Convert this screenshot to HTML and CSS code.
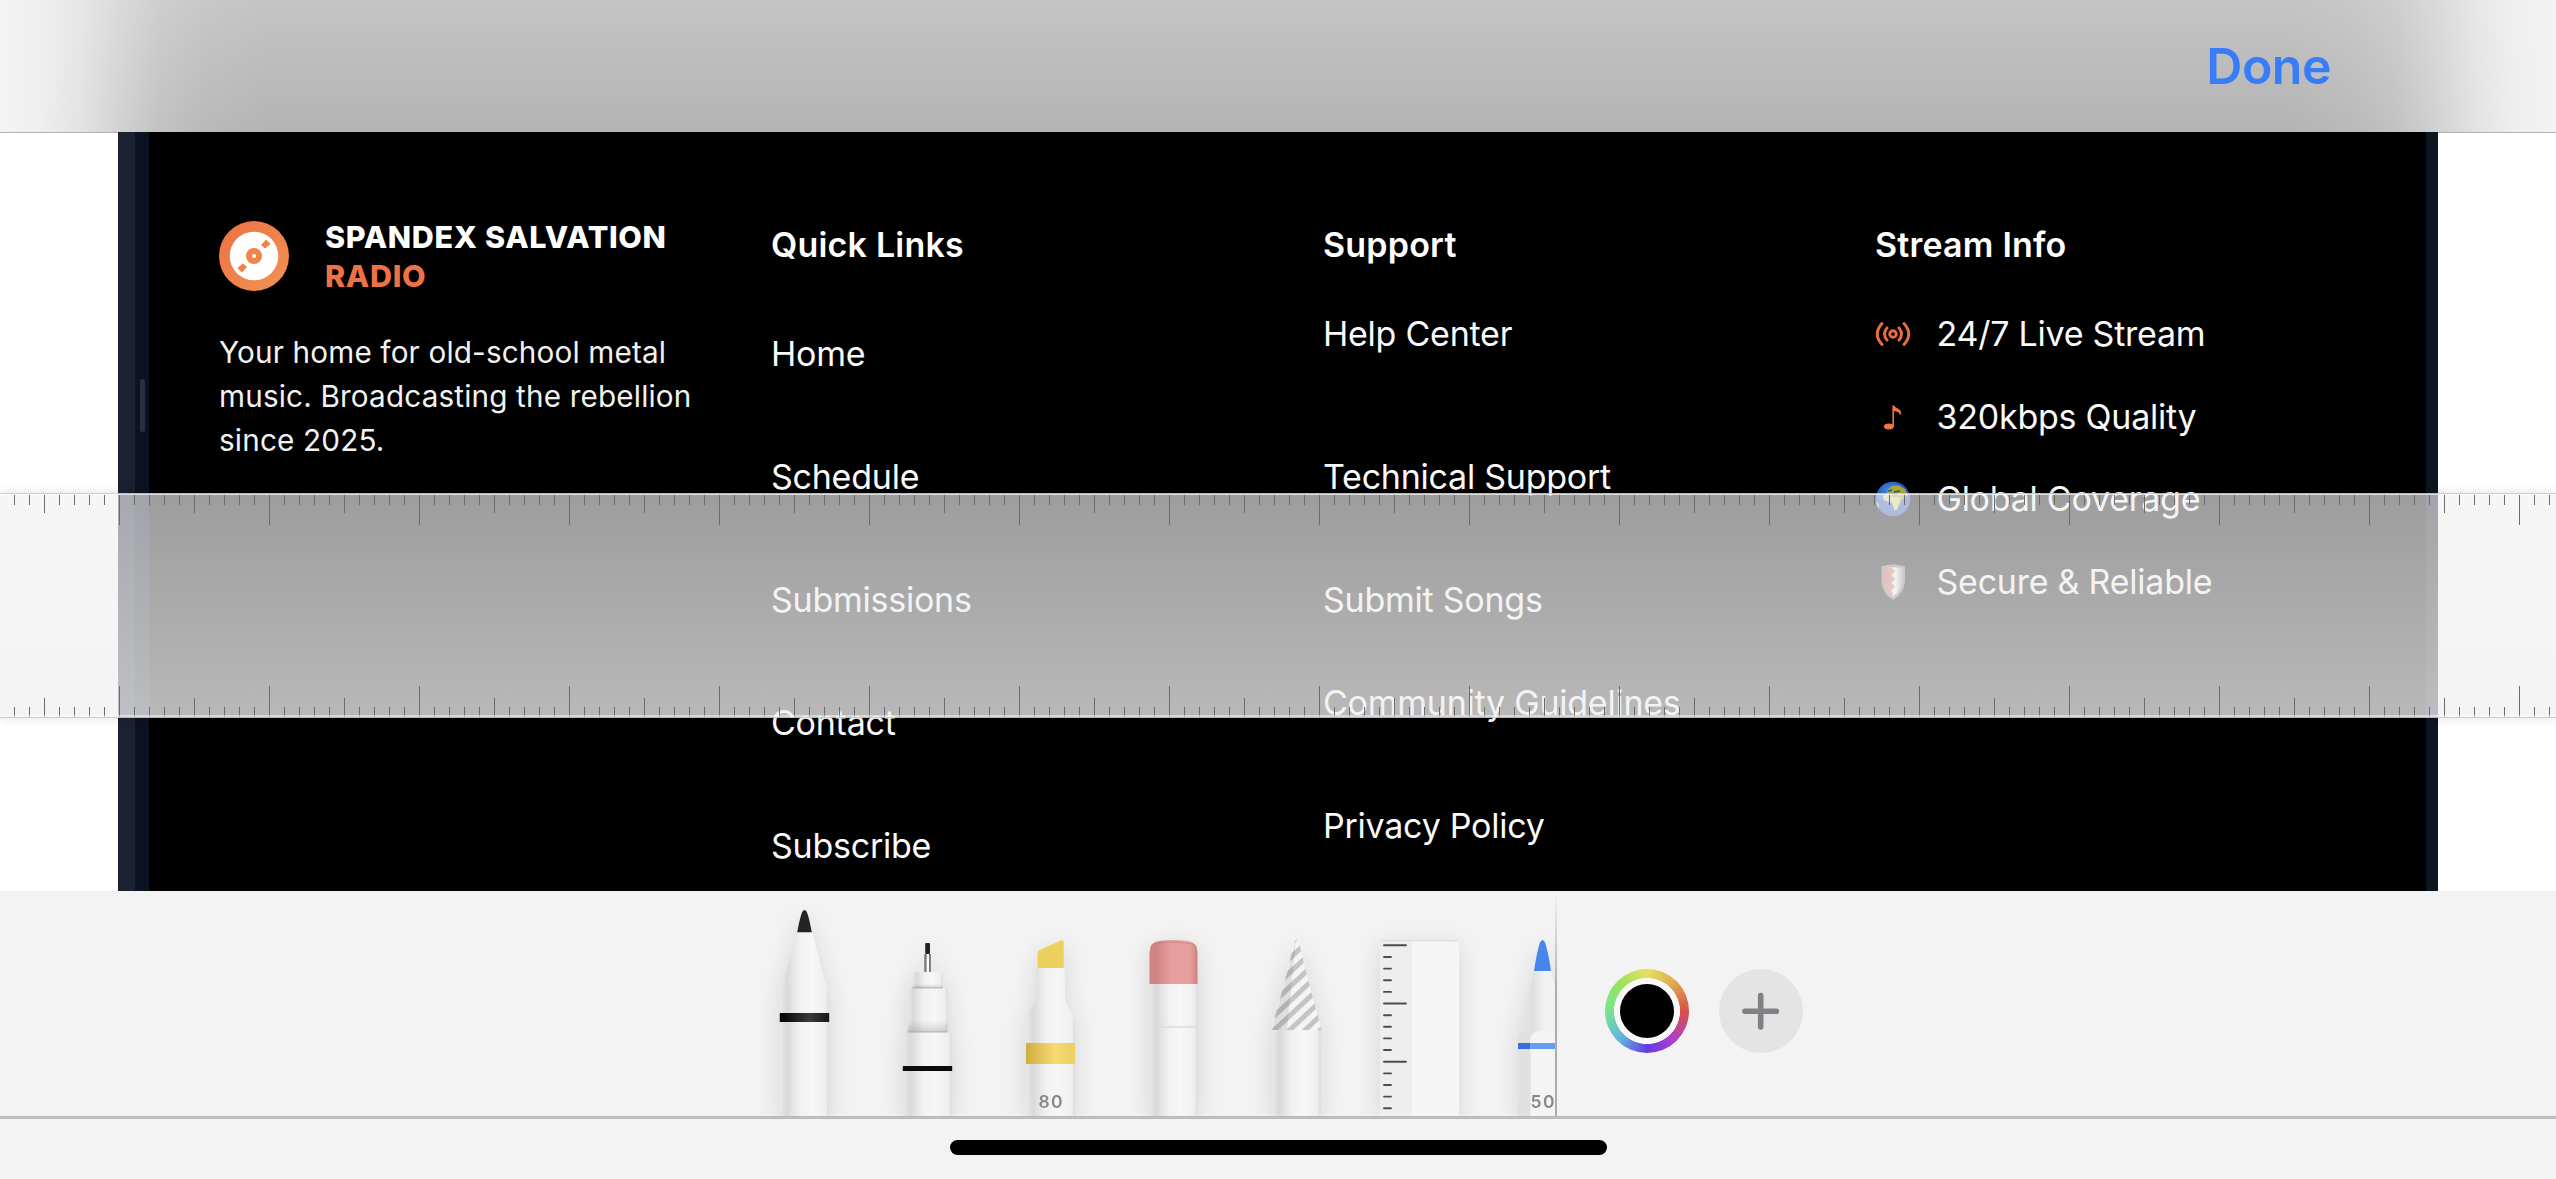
FILE: index.html
```html
<!DOCTYPE html>
<html lang="en">
<head>
<meta charset="utf-8">
<title>Markup</title>
<link rel="stylesheet" href="styles.css">
</head>
<body>
<header class="topbar"><button class="done">Done</button></header>

<main class="canvas">
  <div class="page">
    <footer class="footer">
      <section class="about">
        <div class="brand">
          <svg class="logo" viewBox="0 0 70 70">
            <defs><linearGradient id="disc" x1="0" y1="0" x2="1" y2="1"><stop offset="0" stop-color="#ee7043"/><stop offset="1" stop-color="#f09452"/></linearGradient></defs>
            <circle cx="35" cy="35" r="35" fill="url(#disc)"/>
            <circle cx="35" cy="35" r="24.3" fill="#fff"/>
            <circle cx="35" cy="35" r="5" fill="none" stroke="#f08349" stroke-width="6"/>
            <path d="M42 24 L47 18.600 L51.700 23 L46 27.500 Z M28 46 L23 51.400 L18.300 47 L24 42.500 Z" fill="#f08349"/>
          </svg>
          <h2 class="brand-name">SPANDEX SALVATION<br><span class="accent">RADIO</span></h2>
        </div>
        <p class="tagline">Your home for old-school metal<br>music. Broadcasting the rebellion<br>since 2025.</p>
      </section>
      <section>
        <h3 class="heading">Quick Links</h3>
        <ul class="links quick"><li>Home</li><li>Schedule</li><li>Submissions</li><li>Contact</li><li>Subscribe</li></ul>
      </section>
      <section>
        <h3 class="heading">Support</h3>
        <ul class="links support"><li class="wide">Help Center</li><li>Technical Support</li><li class="tight">Submit Songs</li><li>Community Guidelines</li><li>Privacy Policy</li></ul>
      </section>
      <section>
        <h3 class="heading">Stream Info</h3>
        <ul class="links stream">
          <li><svg class="icon" viewBox="0 0 36 36" fill="none" stroke="#ea6d40" stroke-width="2.900" stroke-linecap="round"><circle cx="18" cy="18" r="3.300"/><path d="M12 11.800Q7 18 12 24.200M24 11.800Q29 18 24 24.200M7 7.500Q-2.500 18 7 28.500M29 7.500Q38.500 18 29 28.500"/></svg>24/7 Live Stream</li>
          <li><svg class="icon" viewBox="0 0 36 36"><ellipse cx="13.800" cy="27.500" rx="4.900" ry="3" fill="#ee7346"/><path d="M18.200 27.500V6.500C19 11 27 9.500 25.200 15.500" fill="none" stroke="#ee7346" stroke-width="1.600"/><path d="M18.200 7Q19 9 24 11.500Q26.500 13 25 15.500Q25 12.500 18.200 12Z" fill="#ee7346"/></svg>320kbps Quality</li>
          <li><svg class="icon" viewBox="0 0 36 36"><defs><radialGradient id="sea" cx=".4" cy=".3" r=".75"><stop offset="0" stop-color="#4f93e6"/><stop offset=".55" stop-color="#2458c8"/><stop offset="1" stop-color="#3448a8"/></radialGradient></defs><circle cx="18" cy="18" r="17.300" fill="url(#sea)"/><path d="M13 8L18 4.500L24 4.500L30 8L33 14L30 16L27 19L22 29L19.500 29.500L17 22L9 19.500L7.500 15L12 12Z" fill="#aead35"/><path d="M8 15L12 13L16 13.500L18 16L24 16L25 19L21.500 29L19.500 29L17 21.500L9 19Z" fill="#dcd893"/><path d="M13 10L17 9M19 11L25 10M17 13L23 13.500" stroke="#2458c8" stroke-width="1.500"/><path d="M1 21L4 23L3.500 28Z" fill="#d8c85c"/></svg>Global Coverage</li>
          <li><svg class="icon" viewBox="0 0 36 36"><defs><linearGradient id="steel"><stop offset="0" stop-color="#888"/><stop offset=".6" stop-color="#fff"/><stop offset="1" stop-color="#888"/></linearGradient></defs><path d="M6.500 2.500Q18-1.500 30 2.500V17Q29 29 18 36Q7 29 6.500 17Z" fill="#777"/><path d="M9 4.500Q18 2 27.500 4.500V17Q26.500 27 18 32.500Q9.500 27 9 17Z" fill="url(#steel)"/><path d="M9 4.500L16 3.500L20.500 7.500L16 11L20.500 15L16 18.500L20.500 22.500L16 26L18 30L17 31.800Q9.500 27 9 17Z" fill="#d44a3c" opacity=".8"/></svg>Secure &amp; Reliable</li>
        </ul>
      </section>
    </footer>
  </div>
  <i class="handle"></i>
  <div class="ruler"></div>
</main>

<div class="toolbar">
  <div class="tools">
    <svg class="tool" viewBox="0 0 123 225">
      <defs>
        <linearGradient id="barrel"><stop offset="0" stop-color="#e9e9e9"/><stop offset=".14" stop-color="#d9d9d9"/><stop offset=".4" stop-color="#f1f1f1"/><stop offset=".65" stop-color="#f7f7f7"/><stop offset=".93" stop-color="#efefef"/><stop offset="1" stop-color="#dcdcdc"/></linearGradient>
        <linearGradient id="ink"><stop offset="0" stop-color="#000"/><stop offset=".6" stop-color="#3a3a3a"/><stop offset="1" stop-color="#181818"/></linearGradient>
      </defs>
      <path d="M54 41.500H69L83 93Q86 103 86 112V235H37V112Q37 103 40 93Z" fill="url(#barrel)"/>
      <path d="M54.200 41.300Q57 26 59.300 20.800Q61.500 17 63.700 20.800Q66 26 68.800 41.300Z" fill="#242424"/>
      <rect x="36.800" y="122" width="49.400" height="9" fill="url(#ink)"/>
    </svg>
    <svg class="tool" viewBox="0 0 123 225">
      <defs><linearGradient id="fade" x2="0" y2="1"><stop offset=".75" stop-color="#000" stop-opacity="0"/><stop offset="1" stop-color="#000" stop-opacity=".15"/></linearGradient></defs>
      <rect x="58.300" y="63" width="6.600" height="18" fill="#777"/><rect x="60.600" y="63" width="2.400" height="18" fill="#fff"/>
      <rect x="59.200" y="52" width="4.800" height="11" rx="1" fill="#222"/>
      <path d="M46.500 81H76.500V97H46.500Z" fill="url(#barrel)"/><path d="M46.500 81H76.500V97H46.500Z" fill="url(#fade)"/>
      <path d="M41.500 97H81.500V141H41.500Z" fill="url(#barrel)"/><path d="M41.500 97H81.500V141H41.500Z" fill="url(#fade)"/>
      <path d="M37.500 141H85.500V235H37.500Z" fill="url(#barrel)"/>
      <path d="M46.500 97H76.500M41.500 141H81.500" stroke="#a5a5a5" stroke-width=".8"/>
      <rect x="36.800" y="175" width="49.400" height="5" fill="#0b0b0b"/>
    </svg>
    <svg class="tool" viewBox="0 0 123 225">
      <defs><linearGradient id="amber"><stop offset="0" stop-color="#cfae40"/><stop offset=".6" stop-color="#f7da72"/><stop offset="1" stop-color="#eccd5e"/></linearGradient></defs>
      <path d="M47.500 77H75.500L76 107C76 116 86 118 86 136V235H37V136C37 118 47 116 47 107Z" fill="url(#barrel)"/>
      <path d="M48.600 77V62Q48.600 60 51 58.800L72.500 49.300Q74.700 48.600 74.700 51.500V77Z" fill="#edcf5e"/>
      <rect x="37" y="152" width="49" height="21" fill="url(#amber)"/>
      <text x="62.300" y="217" class="size">80</text>
    </svg>
    <svg class="tool" viewBox="0 0 123 225">
      <defs><linearGradient id="rubber"><stop offset="0" stop-color="#d08383"/><stop offset=".15" stop-color="#cf8484"/><stop offset=".45" stop-color="#e69f9d"/><stop offset=".85" stop-color="#e69f9d"/><stop offset="1" stop-color="#cc8080"/></linearGradient></defs>
      <rect x="37.500" y="92" width="48" height="140" fill="url(#barrel)"/>
      <path d="M37.500 93V62Q37.500 51 47 50Q61.500 48 76 50Q85.500 51 85.500 62V93Z" fill="url(#rubber)"/>
      <path d="M41 53.500Q61 48.500 82 53.500" fill="none" stroke="#c57a7a" stroke-width="1.200" opacity=".7"/>
      <path d="M37.500 136H85.500" stroke="#dcdcdc" stroke-width="1.500"/>
    </svg>
    <svg class="tool" viewBox="0 0 123 225">
      <defs>
        <pattern id="stripes" width="10" height="10.500" patternUnits="userSpaceOnUse" patternTransform="rotate(-43)"><rect width="10" height="10.500" fill="#f5f5f5"/><rect width="10" height="5" fill="#c3c4c6"/></pattern>
        <clipPath id="cone"><path d="M37 139Q38 131 45.500 106L53 77L58.300 54.500Q61.500 43 64.700 54.500L70 77L77.500 106Q85 131 86 139Z"/></clipPath>
      </defs>
      <rect x="37.500" y="139" width="48" height="95" fill="url(#barrel)"/>
      <g clip-path="url(#cone)"><rect x="30" y="45" width="60" height="94" fill="url(#stripes)"/><path d="M61 49L37 139H52Z" fill="#000" opacity=".09"/></g>
    </svg>
    <svg class="tool" viewBox="0 0 123 225">
      <rect x="22" y="49" width="79" height="190" rx="2" fill="#f5f5f5"/>
      <path d="M22 51H54V225H22Z" fill="#eeeeee"/><path d="M23 49.700H100" stroke="#dfdfdf" stroke-width="1.600"/>
      <path d="M26 54.300h22M26 112.500h22M26 170.700h22M26 66h7M26 77.600h7M26 89.200h7M26 100.900h7M26 124.200h7M26 135.800h7M26 147.400h7M26 159h7M26 182.400h7M26 194h7M26 205.600h7M26 217.300h7" stroke="#4c4c4c" stroke-width="1.900" stroke-linecap="round"/>
    </svg>
    <svg class="tool cut" viewBox="0 0 76 225">
      <defs><linearGradient id="conic"><stop offset="0" stop-color="#e6e6e6"/><stop offset=".3" stop-color="#dedfe1"/><stop offset=".55" stop-color="#f2f2f2"/><stop offset="1" stop-color="#f2f2f2"/></linearGradient></defs>
      <path d="M53.500 79.500H70L84 137Q86 143 86 150H37Q37 143 39 137Z" fill="url(#conic)"/>
      <path d="M37 235V148Q38 140 43 139.500Q48 140 49.500 147V235Z" fill="#e0e0e0"/>
      <path d="M49.500 235V147Q51 140 61.500 140Q72 140 74 147L76 235Z" fill="#f4f4f4"/>
      <path d="M53 80Q56 60 59 51.500Q61.500 46.500 64 51.500Q67 60 70 80Z" fill="#4585ec"/>
      <rect x="37" y="152" width="12.500" height="6" fill="#3470df"/><rect x="49.500" y="152" width="30" height="6" fill="#659df3"/>
      <text x="62.300" y="217" class="size">50</text>
    </svg>
  </div>
  <div class="divider"></div>
  <button class="wheel"><i></i></button>
  <button class="add"><svg viewBox="0 0 84 84"><path d="M41.700 26.500V58M26 42.300H57.400" stroke="#818185" stroke-width="5.600" stroke-linecap="round"/></svg></button>
</div>
<div class="bottom"><i class="home-indicator"></i></div>
</body>
</html>
```
FILE: styles.css
```css
* { box-sizing: border-box; }
body { margin: 0; width: 2556px; height: 1179px; overflow: hidden; display: flex; flex-direction: column; background: #f3f3f3; font-family: Inter, "Liberation Sans", sans-serif; }
h2, h3, p, ul { margin: 0; padding: 0; }
ul { list-style: none; }
button { border: 0; padding: 0; background: none; font-family: inherit; }
i { display: block; }

.topbar {
  height: 132px; flex: none; display: flex; align-items: center; justify-content: flex-end; padding-right: 225px;
  background:
    linear-gradient(90deg, #f3f3f3 0, rgba(243,243,243,.93) 40px, rgba(243,243,243,.74) 80px, rgba(243,243,243,.48) 118px, rgba(243,243,243,.22) 160px, rgba(243,243,243,.08) 205px, rgba(243,243,243,0) 270px, rgba(243,243,243,0) 2286px, rgba(243,243,243,.08) 2351px, rgba(243,243,243,.22) 2396px, rgba(243,243,243,.48) 2438px, rgba(243,243,243,.74) 2476px, rgba(243,243,243,.93) 2516px, #f3f3f3 2556px),
    linear-gradient(#c4c4c4, #b4b4b4);
}
.done { font-size: 50px; font-weight: 600; color: #377df8; line-height: 60px; letter-spacing: -.5px; }

.canvas { height: 759px; flex: none; position: relative; background: #fff; box-shadow: inset 0 1px #b4b4b4; overflow: hidden; padding: 0 118px; }
.page { height: 759px; background: #000; border-left: 17px solid #1b2130; border-right: 12px solid #0e1421; }
.footer { height: 759px; border-left: 14px solid #0c1221; padding: 87px 0 0 70px; display: grid; grid-template-columns: repeat(3, 552px) 470px; color: #fff; }
.handle { position: absolute; left: 140px; top: 247px; width: 5px; height: 53px; border-radius: 3px; background: #2a2e42; }

.brand { display: flex; align-items: center; gap: 36px; height: 77px; }
.logo { width: 70px; height: 70px; flex: none; margin-bottom: 3px; }
.brand-name { font-size: 30.500px; line-height: 38.400px; font-weight: 800; letter-spacing: .66px; white-space: nowrap; margin-top: -2px; }
.accent { color: #ee7344; }
.tagline { margin-top: 33.500px; font-size: 29.700px; line-height: 44px; letter-spacing: .16px; color: #f2f2f2; white-space: nowrap; }
.heading { margin-top: 6px; font-size: 34px; line-height: 40px; font-weight: 600; letter-spacing: .2px; }
.links { display: flex; flex-direction: column; font-size: 34px; line-height: 60px; letter-spacing: -.24px; white-space: nowrap; color: #fafafa; }
.quick { margin-top: 59px; gap: 63px; }
.support { margin-top: 39px; gap: 63px; }
.support .wide { margin-bottom: 20px; }
.support .tight { margin-bottom: -20px; }
.stream { margin-top: 39px; gap: 22.500px; }
.stream li { display: flex; align-items: center; gap: 25.500px; }
.icon { width: 36px; height: 36px; flex: none; }

/* translucent straightedge lying over the page */
.ruler {
  position: absolute; left: 0; right: 0; top: 361px; height: 225px;
  box-shadow: 0 0 10px rgba(0,0,0,.13), inset 0 1px rgba(120,120,120,.35), inset 0 2px rgba(255,255,255,.65), inset 0 -1px rgba(120,120,120,.35), inset 0 -3px rgba(255,255,255,.45);
  background:
    linear-gradient(90deg, #6c6c6c 1px, transparent 1px) 14px 2px / 15px 10px repeat-x,
    linear-gradient(90deg, #6c6c6c 1px, transparent 1px) 44px 2px / 75px 18px repeat-x,
    linear-gradient(90deg, #6c6c6c 1px, transparent 1px) 119px 2px / 150px 30px repeat-x,
    linear-gradient(90deg, #6c6c6c 1px, transparent 1px) 14px 214px / 15px 10px repeat-x,
    linear-gradient(90deg, #6c6c6c 1px, transparent 1px) 44px 205px / 75px 19px repeat-x,
    linear-gradient(90deg, #6c6c6c 1px, transparent 1px) 119px 193px / 150px 31px repeat-x,
    linear-gradient(rgba(241,241,241,.65), rgba(240,240,240,.77));
}

.toolbar { height: 228px; flex: none; display: flex; padding-left: 742.500px; border-bottom: 3px solid #bcbcbe; }
.tools { display: flex; width: 812.500px; overflow: hidden; }
.tool { width: 123px; height: 225px; flex: none; filter: drop-shadow(0 6px 12px rgba(0,0,0,.12)); }
.cut { width: 76px; }
.size { font-family: Inter, sans-serif; font-size: 17.500px; font-weight: 600; letter-spacing: 1.400px; fill: #88888c; text-anchor: middle; }
.divider { width: 2px; height: 225px; background: linear-gradient(rgba(172,172,176,0), #acacb0 45%); }
.wheel { width: 84px; height: 84px; margin: 78px 30px 0 48px; border-radius: 50%; display: grid; place-items: center;
  background: radial-gradient(circle, #f8f8f8 32.700px, transparent 33.300px), conic-gradient(#e6df63, #dca850 45deg, #d95045 90deg, #ae3fcb 137deg, #653cdf 180deg, #62b7df 225deg, #79e392 270deg, #98e35c 315deg, #e6df63); }
.wheel i { width: 54px; height: 54px; border-radius: 50%; background: #000; }
.add { width: 84px; height: 84px; margin-top: 78px; border-radius: 50%; background: #e4e4e4; }
.add svg { display: block; }
.bottom { height: 60px; flex: none; padding-top: 21px; }
.home-indicator { width: 657px; height: 15px; border-radius: 8px; background: #000; margin: 0 auto; }
```
